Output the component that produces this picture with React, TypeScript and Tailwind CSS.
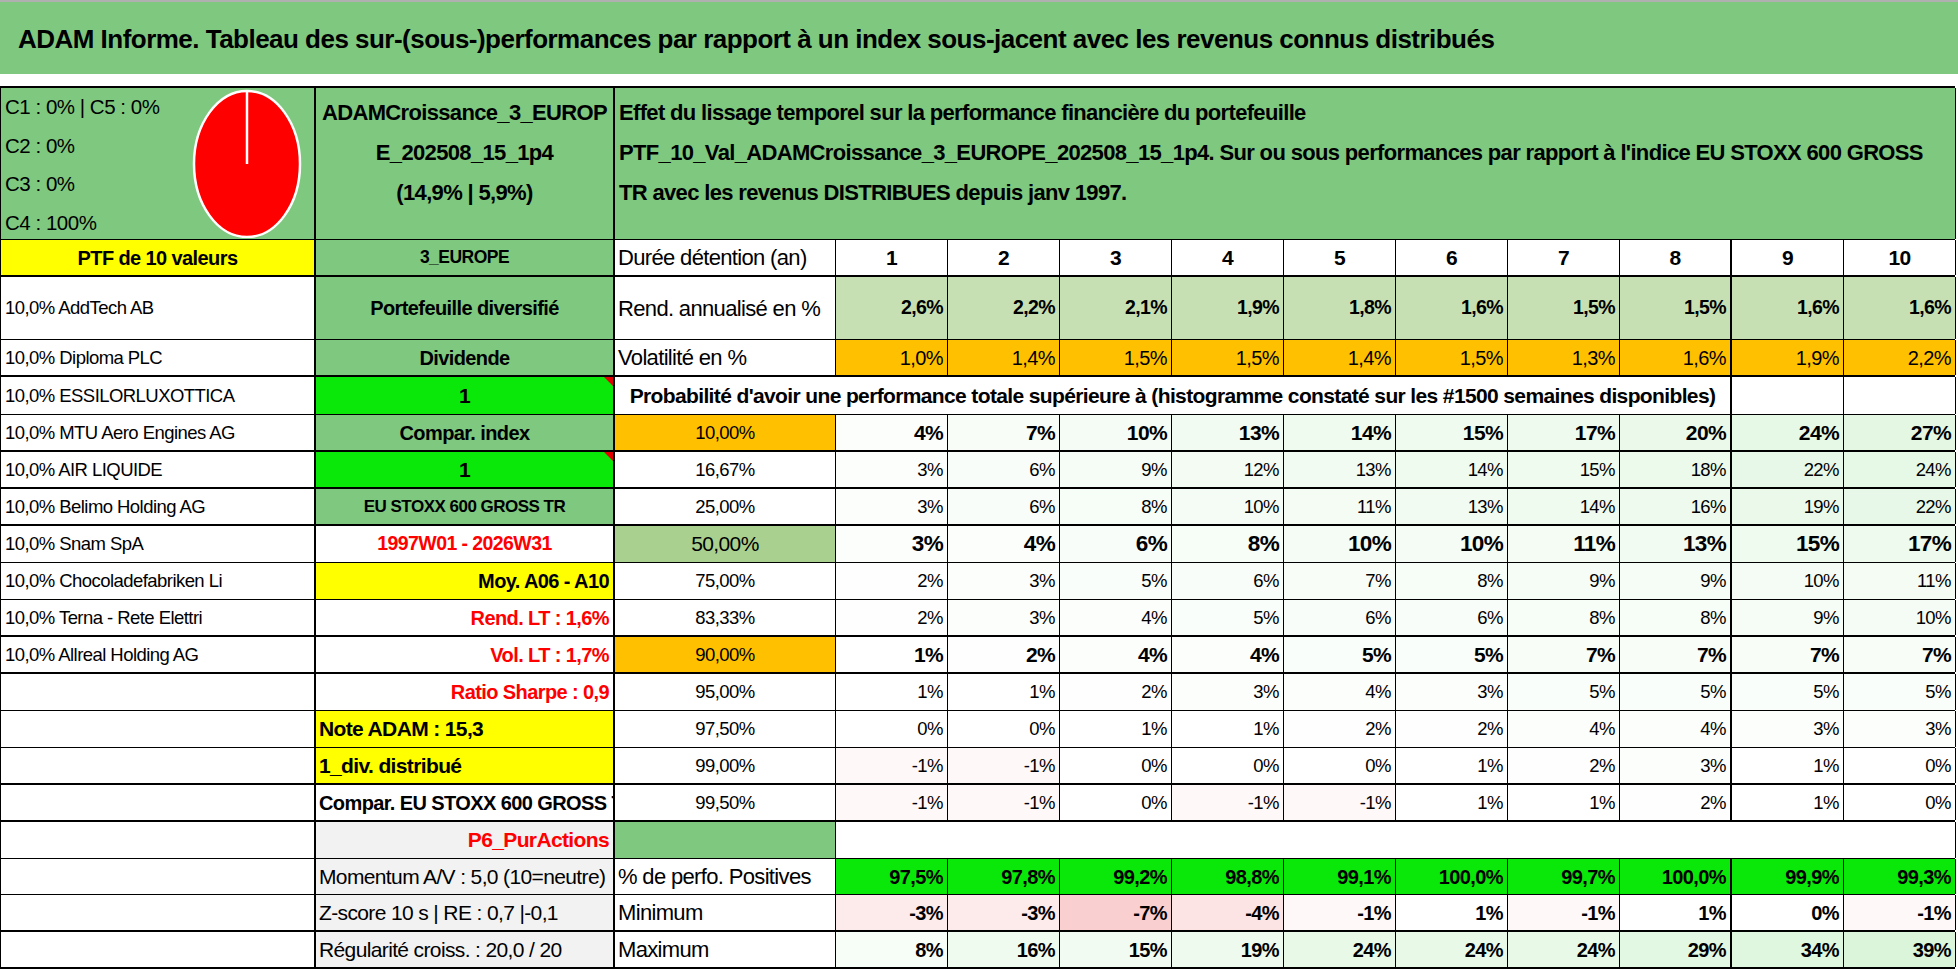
import React from "react";

// column template shared by every row of the sheet
const GRID = "grid grid-cols-[315px_299px_221px_repeat(10,112px)]";

const GREEN = "bg-[#7fc87f]";
const LIME = "bg-[#0ae80a]";
const YELLOW = "bg-[#ffff00]";
const ORANGE = "bg-[#ffc000]";
const GRAY = "bg-[#f2f2f2]";
const RED_TXT = "text-[#ff0000]";

const names = [
  "AddTech AB",
  "Diploma PLC",
  "ESSILORLUXOTTICA",
  "MTU Aero Engines AG",
  "AIR LIQUIDE",
  "Belimo Holding AG",
  "Snam SpA",
  "Chocoladefabriken Li",
  "Terna - Rete Elettri",
  "Allreal Holding AG",
];

const years = [1, 2, 3, 4, 5, 6, 7, 8, 9, 10];
const rend = ["2,6", "2,2", "2,1", "1,9", "1,8", "1,6", "1,5", "1,5", "1,6", "1,6"];
const vol = ["1,0", "1,4", "1,5", "1,5", "1,4", "1,5", "1,3", "1,6", "1,9", "2,2"];
const positives = ["97,5", "97,8", "99,2", "98,8", "99,1", "100,0", "99,7", "100,0", "99,9", "99,3"];
const minimum = [-3, -3, -7, -4, -1, 1, -1, 1, 0, -1];
const maximum = [8, 16, 15, 19, 24, 24, 24, 29, 34, 39];

type Side = { text: string; cls: string; tri?: boolean };

interface ProbRow {
  a: string;
  b: Side;
  c: string;
  cCls: string;
  v: number[];
  vCls: string;
  thick: boolean;
}

const probRows: ProbRow[] = [
  {
    a: names[3],
    b: { text: "Compar. index", cls: `${GREEN} justify-center font-bold text-[20px]` },
    c: "10,00%",
    cCls: `${ORANGE} text-[18.5px]`,
    v: [4, 7, 10, 13, 14, 15, 17, 20, 24, 27],
    vCls: "font-bold text-[21px]",
    thick: true,
  },
  {
    a: names[4],
    b: { text: "1", cls: `${LIME} justify-center font-bold text-[21px]`, tri: true },
    c: "16,67%",
    cCls: "text-[18.5px]",
    v: [3, 6, 9, 12, 13, 14, 15, 18, 22, 24],
    vCls: "text-[18.5px]",
    thick: true,
  },
  {
    a: names[5],
    b: { text: "EU STOXX 600 GROSS TR", cls: `${GREEN} justify-center font-bold text-[17px]` },
    c: "25,00%",
    cCls: "text-[18.5px]",
    v: [3, 6, 8, 10, 11, 13, 14, 16, 19, 22],
    vCls: "text-[18.5px]",
    thick: true,
  },
  {
    a: names[6],
    b: { text: "1997W01 - 2026W31", cls: `justify-center font-bold text-[19.5px] ${RED_TXT}` },
    c: "50,00%",
    cCls: "bg-[#a9d08e] text-[21px]",
    v: [3, 4, 6, 8, 10, 10, 11, 13, 15, 17],
    vCls: "font-bold text-[22.5px]",
    thick: false,
  },
  {
    a: names[7],
    b: { text: "Moy. A06 - A10", cls: `${YELLOW} justify-end pr-[4px] font-bold text-[20px]` },
    c: "75,00%",
    cCls: "text-[18.5px]",
    v: [2, 3, 5, 6, 7, 8, 9, 9, 10, 11],
    vCls: "text-[18.5px]",
    thick: false,
  },
  {
    a: names[8],
    b: { text: "Rend. LT : 1,6%", cls: `justify-end pr-[4px] font-bold text-[20px] ${RED_TXT}` },
    c: "83,33%",
    cCls: "text-[18.5px]",
    v: [2, 3, 4, 5, 6, 6, 8, 8, 9, 10],
    vCls: "text-[18.5px]",
    thick: true,
  },
  {
    a: names[9],
    b: { text: "Vol. LT : 1,7%", cls: `justify-end pr-[4px] font-bold text-[20px] ${RED_TXT}` },
    c: "90,00%",
    cCls: `${ORANGE} text-[18.5px]`,
    v: [1, 2, 4, 4, 5, 5, 7, 7, 7, 7],
    vCls: "font-bold text-[21px]",
    thick: true,
  },
  {
    a: "",
    b: { text: "Ratio Sharpe : 0,9", cls: `justify-end pr-[4px] font-bold text-[20px] ${RED_TXT}` },
    c: "95,00%",
    cCls: "text-[18.5px]",
    v: [1, 1, 2, 3, 4, 3, 5, 5, 5, 5],
    vCls: "text-[18.5px]",
    thick: false,
  },
  {
    a: "",
    b: { text: "Note ADAM : 15,3", cls: `${YELLOW} justify-start pl-[3px] font-bold text-[21px]` },
    c: "97,50%",
    cCls: "text-[18.5px]",
    v: [0, 0, 1, 1, 2, 2, 4, 4, 3, 3],
    vCls: "text-[18.5px]",
    thick: false,
  },
  {
    a: "",
    b: { text: "1_div. distribué", cls: `${YELLOW} justify-start pl-[3px] font-bold text-[21px]` },
    c: "99,00%",
    cCls: "text-[18.5px]",
    v: [-1, -1, 0, 0, 0, 1, 2, 3, 1, 0],
    vCls: "text-[18.5px]",
    thick: true,
  },
  {
    a: "",
    b: { text: "Compar. EU STOXX 600 GROSS TR", cls: "justify-start pl-[3px] font-bold text-[20px]" },
    c: "99,50%",
    cCls: "text-[18.5px]",
    v: [-1, -1, 0, -1, -1, 1, 1, 2, 1, 0],
    vCls: "text-[18.5px]",
    thick: true,
  },
];

// colour scale like the sheet's conditional formatting
function probBg(v: number) {
  if (v < 0) {
    const t = Math.min(1, -v / 7);
    return `rgb(${255 - t * 5},${255 - t * 48},${255 - t * 48})`;
  }
  const t = Math.min(1, v / 27);
  return `rgb(${255 - t * 28},${255 - t * 8},${255 - t * 28})`;
}

function maxBg(v: number) {
  const t = Math.min(1, v / 39);
  return `rgb(${255 - t * 37},${255 - t * 10},${255 - t * 37})`;
}

function Row({
  h,
  thick,
  top,
  children,
}: {
  h: string;
  thick?: boolean;
  top?: boolean;
  children: React.ReactNode;
}) {
  return (
    <div
      className={`${GRID} ${h} border-l border-black ${thick ? "border-b-2" : "border-b"} ${
        top ? "border-t-2" : ""
      }`}
    >
      {children}
    </div>
  );
}

function Cell({
  className = "",
  edge = "border-r",
  style,
  children,
}: {
  className?: string;
  edge?: string;
  style?: React.CSSProperties;
  children?: React.ReactNode;
}) {
  return (
    <div
      className={`relative flex items-center overflow-hidden whitespace-nowrap tracking-[-0.03em] border-black ${edge} ${className}`}
      style={style}
    >
      {children}
    </div>
  );
}

// the ten numeric cells of a row; the line after year 8 is drawn heavier
function Values({
  items,
  cls,
  bg,
}: {
  items: string[];
  cls: string;
  bg?: (i: number) => string | undefined;
}) {
  return (
    <>
      {items.map((t, i) => (
        <Cell
          key={i}
          edge={i === 7 ? "border-r-2" : "border-r"}
          className={`justify-end pr-[4px] ${cls}`}
          style={bg ? { backgroundColor: bg(i) } : undefined}
        >
          {t}
        </Cell>
      ))}
    </>
  );
}

function Corner() {
  return (
    <span className="absolute right-0 top-0 h-0 w-0 border-l-[9px] border-t-[9px] border-l-transparent border-t-[#e00000]" />
  );
}

function Pie() {
  return (
    <svg width="110" height="149" viewBox="0 0 110 149" className="mr-[12px] shrink-0">
      <ellipse cx="55" cy="75" rx="53" ry="73" fill="#ff0000" stroke="#ffffff" strokeWidth="2.5" />
      <line x1="55" y1="75" x2="55" y2="2" stroke="#ffffff" strokeWidth="2.5" />
    </svg>
  );
}

export default function App() {
  return (
    <div className="w-[1958px] h-[979px] overflow-hidden bg-white text-black font-['Liberation_Sans',Arial,sans-serif]">
      <div className="h-[2px] bg-[#b0b0b0]" />
      {/* title bar */}
      <div
        className={`h-[72px] ${GREEN} flex items-center pl-[18px] pt-[2px] text-[26px] font-bold tracking-[-0.02em]`}
      >
        ADAM Informe. Tableau des sur-(sous-)performances par rapport à un index sous-jacent avec les revenus
        connus distribués
      </div>
      <div className="h-[12px] bg-white" />

      <div className="w-[1955px]">
        {/* summary header */}
        <Row h="h-[154px]" top>
          <Cell edge="border-r-2" className={`${GREEN} justify-between items-stretch`}>
            <div className="flex flex-col pl-[4px] text-[20.5px] leading-[38.5px]">
              <span>C1 : 0% | C5 : 0%</span>
              <span>C2 : 0%</span>
              <span>C3 : 0%</span>
              <span>C4 : 100%</span>
            </div>
            <div className="flex items-center">
              <Pie />
            </div>
          </Cell>
          <Cell
            edge="border-r-2"
            className={`${GREEN} flex-col items-center justify-start pt-[5px] text-[22px] font-bold leading-[40px] tracking-[-0.02em]`}
          >
            <span>ADAMCroissance_3_EUROP</span>
            <span>E_202508_15_1p4</span>
            <span>(14,9% | 5,9%)</span>
          </Cell>
          <Cell
            className={`${GREEN} col-span-11 flex-col items-start justify-start pl-[4px] pt-[5px] text-[22px] font-bold leading-[40px] tracking-[-0.02em]`}
          >
            <span>Effet du lissage temporel sur la performance financière du portefeuille</span>
            <span>
              PTF_10_Val_ADAMCroissance_3_EUROPE_202508_15_1p4. Sur ou sous performances par rapport à l'indice EU
              STOXX 600 GROSS
            </span>
            <span>TR avec les revenus DISTRIBUES depuis janv 1997.</span>
          </Cell>
        </Row>

        {/* holding period header */}
        <Row h="h-[37px]" thick>
          <Cell edge="border-r-2" className={`${YELLOW} justify-center font-bold text-[20px]`}>
            PTF de 10 valeurs
          </Cell>
          <Cell edge="border-r-2" className={`${GREEN} justify-center font-bold text-[17.5px]`}>
            3_EUROPE
          </Cell>
          <Cell className="pl-[3px] text-[22px]">Durée détention (an)</Cell>
          {years.map((y, i) => (
            <Cell
              key={y}
              edge={i === 7 ? "border-r-2" : "border-r"}
              className="justify-center font-bold text-[21px]"
            >
              {y}
            </Cell>
          ))}
        </Row>

        <Row h="h-[63px]">
          <Cell edge="border-r-2" className="pl-[4px] text-[18.5px]">
            10,0% {names[0]}
          </Cell>
          <Cell edge="border-r-2" className={`${GREEN} justify-center font-bold text-[20px]`}>
            Portefeuille diversifié
          </Cell>
          <Cell className="pl-[3px] text-[22px]">Rend. annualisé en %</Cell>
          <Values items={rend.map((r) => `${r}%`)} cls="bg-[#c6e0b4] font-bold text-[19.5px]" />
        </Row>

        <Row h="h-[37px]" thick>
          <Cell edge="border-r-2" className="pl-[4px] text-[18.5px]">
            10,0% {names[1]}
          </Cell>
          <Cell edge="border-r-2" className={`${GREEN} justify-center font-bold text-[20px]`}>
            Dividende
          </Cell>
          <Cell className="pl-[3px] text-[22px]">Volatilité en %</Cell>
          <Values items={vol.map((r) => `${r}%`)} cls={`${ORANGE} text-[20px]`} />
        </Row>

        <Row h="h-[38px]">
          <Cell edge="border-r-2" className="pl-[4px] text-[18.5px]">
            10,0% {names[2]}
          </Cell>
          <Cell edge="border-r-2" className={`${LIME} justify-center font-bold text-[21px]`}>
            1
            <Corner />
          </Cell>
          <Cell edge="border-r-2" className="col-span-9 justify-center font-bold text-[21px]">
            Probabilité d'avoir une performance totale supérieure à (histogramme constaté sur les #1500 semaines
            disponibles)
          </Cell>
          <Cell />
          <Cell />
        </Row>

        {probRows.map((r, idx) => (
          <Row key={idx} h="h-[37px]" thick={r.thick}>
            <Cell edge="border-r-2" className="pl-[4px] text-[18.5px]">
              {r.a ? `10,0% ${r.a}` : ""}
            </Cell>
            <Cell edge="border-r-2" className={r.b.cls}>
              {r.b.text}
              {r.b.tri && <Corner />}
            </Cell>
            <Cell className={`justify-center ${r.cCls}`}>{r.c}</Cell>
            <Values items={r.v.map((v) => `${v}%`)} cls={r.vCls} bg={(i) => probBg(r.v[i])} />
          </Row>
        ))}

        <Row h="h-[37px]">
          <Cell edge="border-r-2" />
          <Cell edge="border-r-2" className={`${GRAY} justify-end pr-[4px] font-bold text-[21px] ${RED_TXT}`}>
            P6_PurActions
          </Cell>
          <Cell className={GREEN} />
          <Cell className="col-span-10" />
        </Row>

        <Row h="h-[36px]">
          <Cell edge="border-r-2" />
          <Cell edge="border-r-2" className={`${GRAY} pl-[3px] text-[21px]`}>
            Momentum A/V : 5,0 (10=neutre)
          </Cell>
          <Cell className="pl-[3px] text-[22px]">% de perfo. Positives</Cell>
          <Values items={positives.map((p) => `${p}%`)} cls={`${LIME} font-bold text-[20px]`} />
        </Row>

        <Row h="h-[37px]" thick>
          <Cell edge="border-r-2" />
          <Cell edge="border-r-2" className={`${GRAY} pl-[3px] text-[21px]`}>
            Z-score 10 s | RE : 0,7 |-0,1
          </Cell>
          <Cell className="pl-[3px] text-[22px]">Minimum</Cell>
          <Values
            items={minimum.map((v) => `${v}%`)}
            cls="font-bold text-[20px]"
            bg={(i) => probBg(minimum[i])}
          />
        </Row>

        <Row h="h-[37px]" thick>
          <Cell edge="border-r-2" />
          <Cell edge="border-r-2" className={`${GRAY} pl-[3px] text-[21px]`}>
            Régularité croiss. : 20,0 / 20
          </Cell>
          <Cell className="pl-[3px] text-[22px]">Maximum</Cell>
          <Values
            items={maximum.map((v) => `${v}%`)}
            cls="font-bold text-[20px]"
            bg={(i) => maxBg(maximum[i])}
          />
        </Row>
      </div>

      <div className="h-[10px]" />
      <div className="h-[2px] bg-[#a6a6a6]" />
    </div>
  );
}
